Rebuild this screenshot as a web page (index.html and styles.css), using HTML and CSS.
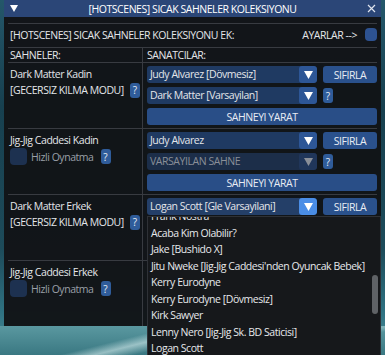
FILE: index.html
```html
<!DOCTYPE html>
<html lang="tr">
<head>
    <meta charset="UTF-8">
    <meta name="viewport" content="width=device-width, initial-scale=1.0">
    <title>HotScenes</title>
    <link rel="stylesheet" href="styles.css">
</head>
<body>
    <div class="window">
        <div class="titlebar">
            <svg class="collapse" width="8" height="7" viewBox="0 0 8 7"><polygon points="0,0 8,0 4,7" fill="#fff"/></svg>
            <span class="title">[HOTSCENES] SICAK SAHNELER KOLEKSIYONU</span>
            <svg class="close" width="9" height="9" viewBox="0 0 9 9"><path d="M1 1L8 8M8 1L1 8" stroke="#dfe4ee" stroke-width="1.2"/></svg>
        </div>
        <div class="content">
            <div class="rule"></div>
            <div class="toprow">
                <span>[HOTSCENES] SICAK SAHNELER KOLEKSIYONU EK:</span>
                <span class="settings">AYARLAR --&gt; <span class="toggle"></span></span>
            </div>

            <div class="row head">
                <div class="left">SAHNELER:</div>
                <div class="right">SANATCILAR:</div>
            </div>

            <div class="row">
                <div class="left">
                    <div class="line">Dark Matter Kadin</div>
                    <div class="line">[GECERSIZ KILMA MODU] <span class="help">?</span></div>
                </div>
                <div class="right">
                    <div class="ctrl">
                        <div class="combo"><span class="val">Judy Alvarez [Dövmesiz]</span><span class="arrow"><svg width="9" height="8" viewBox="0 0 9 8"><polygon points="0,0 9,0 4.5,8" fill="#fff"/></svg></span></div>
                        <button class="btn small">SIFIRLA</button>
                    </div>
                    <div class="ctrl">
                        <div class="combo"><span class="val">Dark Matter [Varsayilan]</span><span class="arrow"><svg width="9" height="8" viewBox="0 0 9 8"><polygon points="0,0 9,0 4.5,8" fill="#fff"/></svg></span></div>
                        <span class="help">?</span>
                    </div>
                    <button class="btn wide">SAHNEYI YARAT</button>
                </div>
            </div>

            <div class="row">
                <div class="left">
                    <div class="line">Jig-Jig Caddesi Kadin</div>
                    <div class="check"><span class="box"></span><span class="dim">Hizli Oynatma</span><span class="help">?</span></div>
                </div>
                <div class="right">
                    <div class="ctrl">
                        <div class="combo"><span class="val">Judy Alvarez</span><span class="arrow"><svg width="9" height="8" viewBox="0 0 9 8"><polygon points="0,0 9,0 4.5,8" fill="#fff"/></svg></span></div>
                        <button class="btn small">SIFIRLA</button>
                    </div>
                    <div class="ctrl">
                        <div class="combo disabled"><span class="val">VARSAYILAN SAHNE</span><span class="arrow"><svg width="9" height="8" viewBox="0 0 9 8"><polygon points="0,0 9,0 4.5,8" fill="#8a8f98"/></svg></span></div>
                        <span class="help">?</span>
                    </div>
                    <button class="btn wide">SAHNEYI YARAT</button>
                </div>
            </div>

            <div class="row">
                <div class="left">
                    <div class="line">Dark Matter Erkek</div>
                    <div class="line">[GECERSIZ KILMA MODU] <span class="help">?</span></div>
                </div>
                <div class="right">
                    <div class="ctrl">
                        <div class="combo open"><span class="val">Logan Scott [Gle Varsayilani]</span><span class="arrow"><svg width="9" height="8" viewBox="0 0 9 8"><polygon points="0,0 9,0 4.5,8" fill="#fff"/></svg></span></div>
                        <button class="btn small">SIFIRLA</button>
                    </div>
                </div>
            </div>

            <div class="row last">
                <div class="left">
                    <div class="line">Jig-Jig Caddesi Erkek</div>
                    <div class="check"><span class="box"></span><span class="dim">Hizli Oynatma</span><span class="help">?</span></div>
                </div>
                <div class="right"></div>
            </div>
        </div>
    </div>
    <div class="ground"></div>

    <div class="popup">
        <ul class="list">
            <li>Frank Nostra</li>
            <li>Acaba Kim Olabilir?</li>
            <li>Jake [Bushido X]</li>
            <li>Jitu Nweke [Jig-Jig Caddesi'nden Oyuncak Bebek]</li>
            <li>Kerry Eurodyne</li>
            <li>Kerry Eurodyne [Dövmesiz]</li>
            <li>Kirk Sawyer</li>
            <li>Lenny Nero [Jig-Jig Sk. BD Saticisi]</li>
            <li>Logan Scott</li>
        </ul>
        <div class="scrollbar"></div>
    </div>
</body>
</html>
```

FILE: styles.css
```css
* {
    box-sizing: border-box;
}

body {
    margin: 0;
    width: 385px;
    height: 355px;
    overflow: hidden;
    position: relative;
    font-family: 'Open Sans', 'Noto Sans', sans-serif;
    font-size: 10.5px;
    letter-spacing: -0.45px;
    color: #e4e6ea;
    background: linear-gradient(180deg, #24576a 0%, #17404f 30%, #1d4b5a 70%, #2f7282 88%, #4f8e97 100%);
}

.window {
    margin-left: 4px;
    width: 377px;
    height: 326px;
    background: rgba(18, 20, 23, 0.97);
    overflow: hidden;
}

.titlebar {
    height: 17px;
    background: #2b4677;
    display: flex;
    align-items: center;
    padding: 0 5px 0 6px;
}

.titlebar .title {
    flex: 1;
    text-align: center;
    color: #fff;
}

.content {
    padding: 0 4px;
}

.rule {
    height: 1px;
    margin-top: 6px;
    background: #383b41;
}

.toprow {
    height: 24px;
    display: flex;
    align-items: center;
    justify-content: space-between;
    padding: 0 0 2px 2px;
    border-bottom: 1px solid #383b41;
}

.settings {
    display: flex;
    align-items: center;
    gap: 8px;
}

.toggle {
    width: 12px;
    height: 13px;
    border-radius: 4px;
    background: #2d5291;
}

.row {
    display: flex;
    height: 66px;
    border-bottom: 1px solid #383b41;
}

.row.head {
    height: 15px;
    line-height: 14px;
}

.row.last {
    height: 66px;
    border-bottom: none;
}

.left {
    width: 135px;
    padding: 3px 0 0 2px;
    border-right: 1px solid #383b41;
}

.row.head .left,
.row.head .right {
    padding-top: 0;
}

.right {
    flex: 1;
    padding: 3px 0 3px 4px;
    display: flex;
    flex-direction: column;
    gap: 4px;
}

.line {
    height: 16px;
    line-height: 16px;
    display: flex;
    align-items: center;
    white-space: nowrap;
}

.line .help {
    margin-left: 6px;
}

.help {
    display: inline-flex;
    align-items: center;
    justify-content: center;
    width: 10px;
    height: 15px;
    border-radius: 3px;
    background: #2f5c9a;
    color: #e8ecf4;
    font-size: 10px;
    letter-spacing: 0;
}

.check {
    display: flex;
    align-items: center;
    height: 17px;
    white-space: nowrap;
}

.check .box {
    width: 17px;
    height: 17px;
    border-radius: 4px;
    background: #1d3150;
    margin-right: 4px;
}

.check .help {
    margin-left: 7px;
}

.dim {
    color: #9aa0a8;
}

.ctrl {
    display: flex;
    align-items: center;
    gap: 6px;
    height: 17px;
}

.combo {
    width: 170px;
    height: 17px;
    display: flex;
    border-radius: 3px;
    overflow: hidden;
    background: #1f3a62;
}

.combo .val {
    flex: 1;
    padding-left: 3px;
    line-height: 17px;
    white-space: nowrap;
    overflow: hidden;
}

.combo .arrow {
    width: 18px;
    display: flex;
    align-items: center;
    justify-content: center;
    border-radius: 3px;
    background: #2d5696;
}

.combo.disabled {
    background: #1c2e49;
    color: #8a8f98;
}

.combo.disabled .arrow {
    background: #20365a;
}

.combo.open {
    background: #243f68;
}

.combo.open .arrow {
    background: #4a8de6;
}

.btn {
    border: none;
    margin: 0;
    padding: 0;
    height: 17px;
    border-radius: 3px;
    background: #2a518c;
    color: #e8ecf4;
    font-family: inherit;
    font-size: inherit;
    letter-spacing: inherit;
}

.btn.small {
    width: 54px;
}

.btn.wide {
    width: 100%;
    background: #294e87;
}

.ground {
    height: 29px;
    background:
        linear-gradient(166deg, transparent 35%, rgba(225, 245, 245, 0.55) 42%, transparent 50%),
        linear-gradient(172deg, transparent 60%, rgba(200, 230, 232, 0.4) 66%, transparent 72%),
        linear-gradient(180deg, #5a98a0, #3a7882);
}

.popup {
    position: absolute;
    left: 147px;
    top: 216px;
    width: 234px;
    height: 150px;
    background: #16181b;
    border: 1px solid #2e3136;
    overflow: hidden;
}

.list {
    list-style: none;
    margin: -9px 0 0;
    padding: 0 0 0 3px;
}

.list li {
    height: 16.5px;
    line-height: 16.5px;
    white-space: nowrap;
    color: #e6e8ec;
}

.scrollbar {
    position: absolute;
    right: 2px;
    top: 58px;
    width: 6px;
    height: 39px;
    border-radius: 3px;
    background: #5f6266;
}
```
